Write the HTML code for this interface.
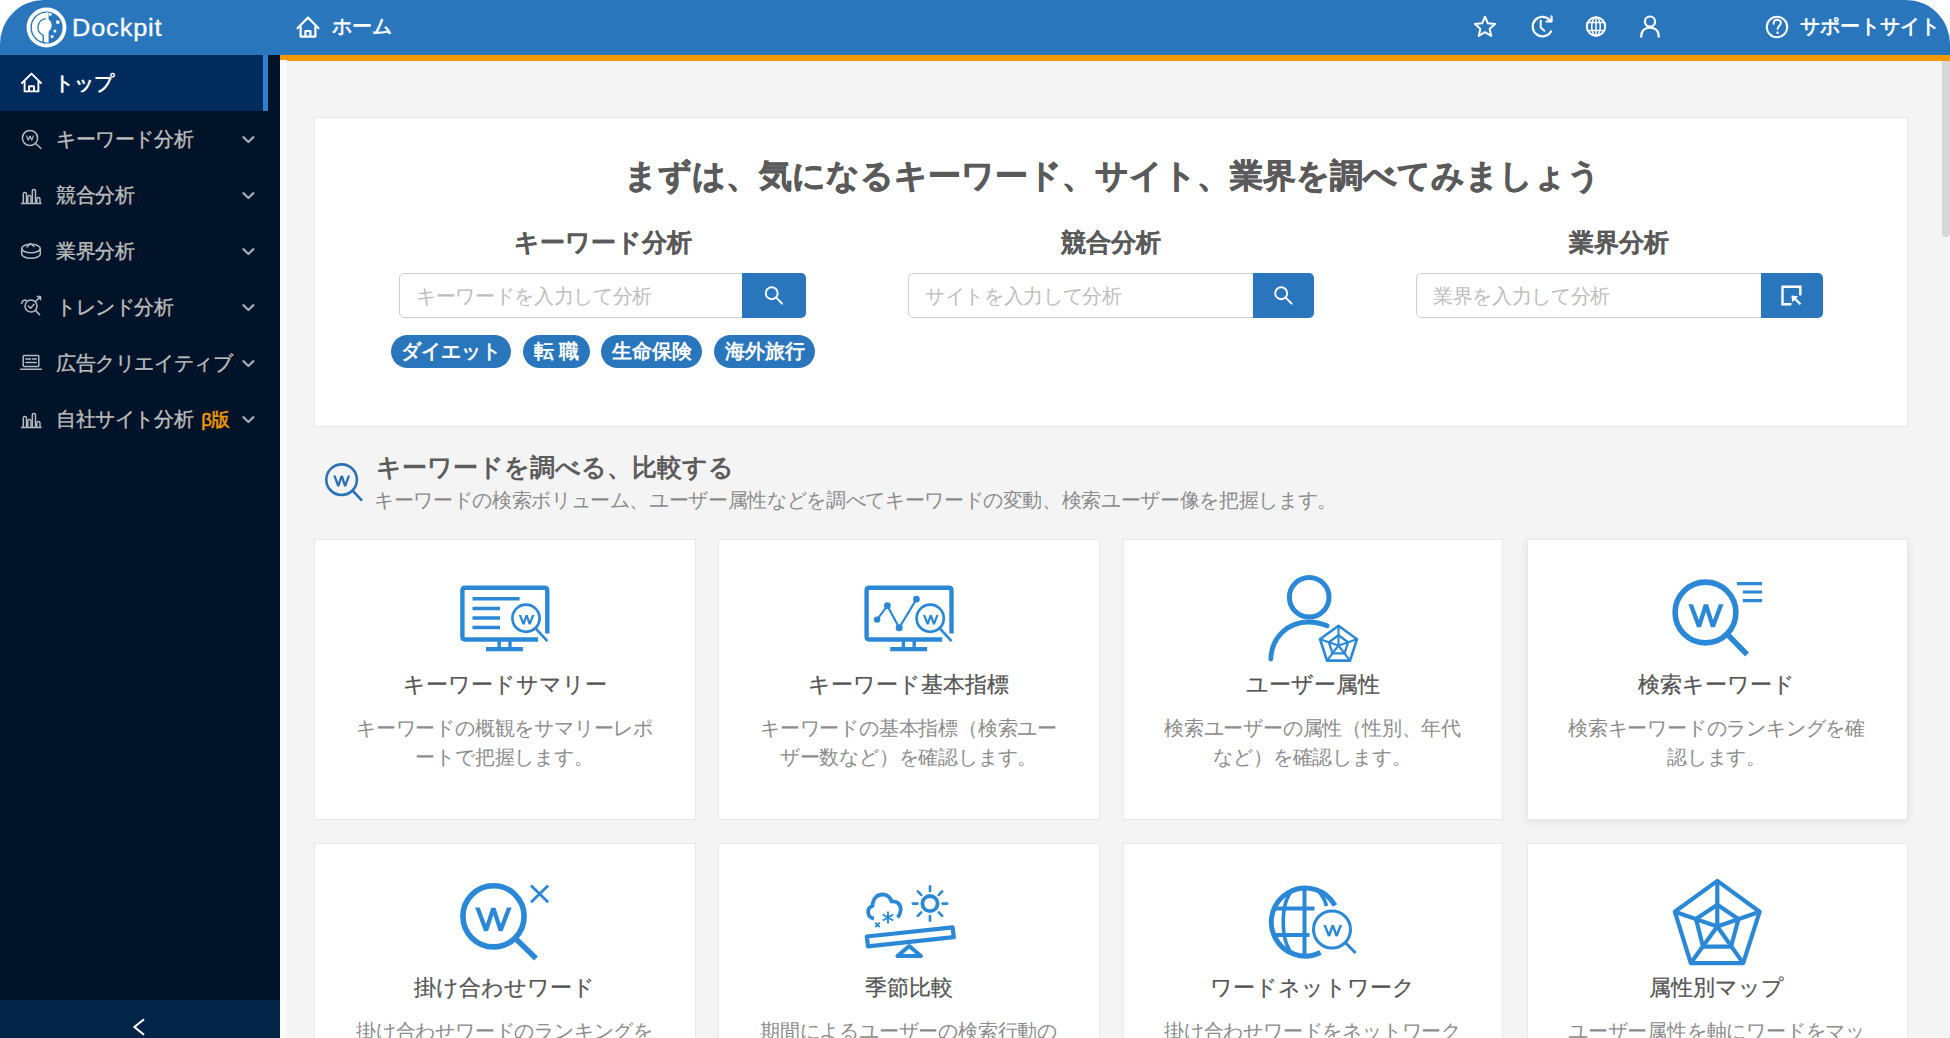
<!DOCTYPE html>
<html><head><meta charset="utf-8">
<style>
*{margin:0;padding:0;box-sizing:border-box}
html,body{width:1950px;height:1038px;overflow:hidden;background:#fff;font-family:"Liberation Sans",sans-serif}
.a{position:absolute;white-space:nowrap}
#hdr{left:0;top:0;width:1950px;height:55px;background:#2a76bd;border-radius:44px 44px 0 0}
#side{left:0;top:55px;width:280px;height:983px;background:#001329}
#act{left:0;top:55px;width:263px;height:56px;background:#002b5c}
#actbar{left:263px;top:55px;width:5px;height:56px;background:#2e80cf}
#coll{left:0;top:1000px;width:280px;height:38px;background:#012447}
#main{left:280px;top:55px;width:1670px;height:983px;background:#f4f4f4}
#orange{left:280px;top:55px;width:1670px;height:5.6px;background:#f39800}
#thumb{left:1942px;top:61px;width:8px;height:176px;background:#d6d6d6;border-radius:0 0 4px 4px}
.card{position:absolute;background:#fff;border:1px solid #e8e8e8}
.sb{font-size:19.5px;line-height:19.5px;letter-spacing:-0.4px;color:#bcbcbc;-webkit-text-stroke:0.35px #bcbcbc}
.ht{font-size:19.5px;line-height:19.5px;color:#fff;font-weight:bold}
.h1{font-size:32.85px;line-height:34px;color:#5a5a5a;font-weight:bold;-webkit-text-stroke:0.7px #5a5a5a}
.h2{font-size:25px;line-height:25px;color:#5a5a5a;font-weight:bold;-webkit-text-stroke:0.15px #5a5a5a;text-align:center;width:400px}
.inp{position:absolute;height:45px;border:1px solid #cfcfcf;border-radius:5px;background:#fff}
.ph{font-size:19.5px;line-height:19.5px;color:#bdbdbd;letter-spacing:-0.35px}
.btn{position:absolute;height:45px;width:64px;background:#2a76bd;border-radius:0 5px 5px 0}
.tag{position:absolute;top:335px;height:33px;border-radius:17px;background:#2a76bd;color:#fff;font-weight:bold;font-size:19.5px;line-height:33px;text-align:center}
.ct{font-size:21.5px;line-height:23px;color:#555;-webkit-text-stroke:0.25px #555;text-align:center;width:381px}
.cd{font-size:19.5px;line-height:29px;letter-spacing:-0.2px;text-indent:0;color:#8c8c8c;text-align:center;width:381px}
</style></head><body>
<div class="a" id="main"></div>
<div class="a" id="hdr"></div>
<div class="a" id="side"></div>
<div class="a" id="act"></div>
<div class="a" id="actbar"></div>
<div class="a" id="coll"></div>
<div class="a" id="orange"></div>
<div class="a" id="thumb"></div>
<div class="a" style="left:280px;top:60px;width:7px;height:978px;background:#fafafa"></div>

<!-- header text -->
<div class="a" style="left:72px;top:13.5px;font-size:23px;line-height:28px;color:#fff;letter-spacing:0.8px;-webkit-text-stroke:0.3px #fff;transform:scaleX(1.1);transform-origin:0 0">Dockpit</div>
<div class="a ht" style="left:332px;top:17px">ホーム</div>
<div class="a ht" style="left:1800px;top:17px">サポートサイト</div>

<!-- sidebar text -->
<div class="a ht" style="left:54px;top:74px">トップ</div>
<div class="a sb" style="left:56px;top:130px">キーワード分析</div>
<div class="a sb" style="left:56px;top:186px">競合分析</div>
<div class="a sb" style="left:56px;top:242px">業界分析</div>
<div class="a sb" style="left:56px;top:298px">トレンド分析</div>
<div class="a sb" style="left:56px;top:354px">広告クリエイティブ</div>
<div class="a sb" style="left:56px;top:410px">自社サイト分析 <span style="color:#f39800;-webkit-text-stroke:0.5px #f39800;font-size:18.5px;margin-left:3px;letter-spacing:-0.5px">β版</span></div>

<!-- top card -->
<div class="card" style="left:314px;top:117px;width:1594px;height:310px"></div>
<div class="a h1" style="left:624px;top:159px">まずは、気になるキーワード、サイト、業界を調べてみましょう</div>
<div class="a h2" style="left:403px;top:230px">キーワード分析</div>
<div class="a h2" style="left:911px;top:230px">競合分析</div>
<div class="a h2" style="left:1419px;top:230px">業界分析</div>

<div class="inp" style="left:399px;top:273px;width:350px"></div>
<div class="btn" style="left:742px;top:273px"></div>
<div class="a ph" style="left:416px;top:287px">キーワードを入力して分析</div>
<div class="inp" style="left:908px;top:273px;width:350px"></div>
<div class="btn" style="left:1253px;top:273px;width:61px"></div>
<div class="a ph" style="left:925px;top:287px">サイトを入力して分析</div>
<div class="inp" style="left:1416px;top:273px;width:350px"></div>
<div class="btn" style="left:1761px;top:273px;width:62px"></div>
<div class="a ph" style="left:1433px;top:287px">業界を入力して分析</div>

<div class="tag" style="left:391px;width:120px">ダイエット</div>
<div class="tag" style="left:523px;width:67px">転 職</div>
<div class="tag" style="left:601px;width:101px">生命保険</div>
<div class="tag" style="left:714px;width:101px">海外旅行</div>

<!-- section header -->
<div class="a" style="left:376px;top:455px;font-size:25px;line-height:25px;color:#5c5c5c;font-weight:bold">キーワードを調べる、比較する</div>
<div class="a" style="left:374px;top:491px;font-size:19.5px;letter-spacing:-0.35px;line-height:19.5px;color:#8c8c8c">キーワードの検索ボリューム、ユーザー属性などを調べてキーワードの変動、検索ユーザー像を把握します。</div>

<!-- cards row 1 -->
<div class="card" style="left:314px;top:539px;width:382px;height:281px"></div>
<div class="card" style="left:718px;top:539px;width:382px;height:281px"></div>
<div class="card" style="left:1123px;top:539px;width:380px;height:281px"></div>
<div class="card" style="left:1527px;top:539px;width:381px;height:281px;box-shadow:0 2px 8px rgba(0,0,0,0.08)"></div>
<!-- cards row 2 -->
<div class="card" style="left:314px;top:843px;width:382px;height:220px"></div>
<div class="card" style="left:718px;top:843px;width:382px;height:220px"></div>
<div class="card" style="left:1123px;top:843px;width:380px;height:220px"></div>
<div class="card" style="left:1527px;top:843px;width:381px;height:220px"></div>

<div class="a ct" style="left:314px;top:674px">キーワードサマリー</div>
<div class="a cd" style="left:314px;top:714px;">キーワードの概観をサマリーレポ<br>ートで把握します。</div>
<div class="a ct" style="left:718px;top:674px">キーワード基本指標</div>
<div class="a cd" style="left:718px;top:714px;">キーワードの基本指標（検索ユー<br>ザー数など）を確認します。</div>
<div class="a ct" style="left:1122px;top:674px">ユーザー属性</div>
<div class="a cd" style="left:1122px;top:714px;">検索ユーザーの属性（性別、年代<br>など）を確認します。</div>
<div class="a ct" style="left:1526px;top:674px">検索キーワード</div>
<div class="a cd" style="left:1526px;top:714px;">検索キーワードのランキングを確<br>認します。</div>

<div class="a ct" style="left:314px;top:977px">掛け合わせワード</div>
<div class="a cd" style="left:314px;top:1017px;">掛け合わせワードのランキングを</div>
<div class="a ct" style="left:718px;top:977px">季節比較</div>
<div class="a cd" style="left:718px;top:1017px;">期間によるユーザーの検索行動の</div>
<div class="a ct" style="left:1122px;top:977px">ワードネットワーク</div>
<div class="a cd" style="left:1122px;top:1017px;">掛け合わせワードをネットワーク</div>
<div class="a ct" style="left:1526px;top:977px">属性別マップ</div>
<div class="a cd" style="left:1526px;top:1017px;">ユーザー属性を軸にワードをマッ</div>

<svg class="a" style="left:0;top:0" width="1950" height="1038" viewBox="0 0 1950 1038" fill="none">
<defs><clipPath id="wc1"><rect x="21.8" y="135.6" width="16.400000000000002" height="9.0"/></clipPath><clipPath id="wc2"><rect x="329.2" y="475.4" width="25.0" height="15.200000000000045"/></clipPath><clipPath id="wc3"><rect x="514.8" y="615" width="23.600000000000023" height="13.5"/></clipPath><clipPath id="wc4"><rect x="919.0" y="615" width="23.600000000000023" height="13.5"/></clipPath><clipPath id="wc5"><rect x="1684.5" y="604.3" width="42.90000000000009" height="27.200000000000045"/></clipPath><clipPath id="wc6"><rect x="471.2" y="907.6" width="44.30000000000001" height="27.799999999999955"/></clipPath><clipPath id="wc7"><rect x="1319.4" y="924.9" width="26.799999999999955" height="15.600000000000023"/></clipPath></defs>
<circle cx="46.5" cy="27.5" r="18" stroke="#fff" stroke-width="3.8"/>
<path d="M46.5 12.8 A14.7 14.7 0 0 0 46.5 42.2 Z" fill="#fff"/>
<path d="M45.8 18.6 A8.8 8.8 0 0 0 43.2 35.4 V43" stroke="#2a76bd" stroke-width="1.4"/>
<rect x="45.8" y="12.5" width="2.8" height="30" fill="#fff"/>
<path d="M46 19.2 C52.5 19.2 53.5 27.5 48.6 31.5 L46 31.5 Z" fill="#fff"/>
<rect x="49" y="13" width="2.6" height="2.6" fill="#fff"/>
<rect x="56.2" y="20.5" width="3.2" height="3.2" fill="#fff"/>
<rect x="53.6" y="29.8" width="2.6" height="2.6" fill="#fff"/>
<rect x="50.8" y="35.3" width="2.6" height="2.6" fill="#fff"/>
<g stroke="#fff" stroke-width="2.2" stroke-linejoin="round" stroke-linecap="round">
<path d="M297.5 28.2 L308 17.6 L318.5 28.2 M300.6 25.4 V36.6 H315.4 V25.4 M305.4 36.6 V31 H310.4 V36.6"/>
<polygon points="1485.00,16.70 1487.88,23.34 1495.08,24.02 1489.66,28.81 1491.23,35.88 1485.00,32.20 1478.77,35.88 1480.34,28.81 1474.92,24.02 1482.12,23.34" stroke-width="2"/>
<path d="M1550.3 20.6 A9.8 9.8 0 1 0 1551 31.5" stroke-width="2.2"/>
<path d="M1551.6 16.3 V21.6 H1546.5" stroke-width="2"/>
<path d="M1540.7 20.8 V27.6 L1544.3 30.8" stroke-width="2"/>
<circle cx="1596" cy="26.5" r="9.2" stroke-width="2"/>
<ellipse cx="1596" cy="26.5" rx="4.3" ry="9.2" stroke-width="1.5"/>
<path d="M1596 17.3 V35.7 M1587.3 22.6 H1604.7 M1587.3 30.4 H1604.7" stroke-width="1.5"/>
<circle cx="1650" cy="21.6" r="5.1" stroke-width="2.2"/>
<path d="M1641.2 36.8 C1641.2 30.5 1645 27.6 1650 27.6 C1655 27.6 1658.8 30.5 1658.8 36.8" stroke-width="2.2"/>
<circle cx="1777" cy="27" r="10.2" stroke-width="2"/>
<path d="M1773.6 23.8 C1773.6 21 1775.5 19.8 1777.3 19.8 C1779.4 19.8 1780.9 21.2 1780.9 23.1 C1780.9 25.6 1777.6 25.9 1777.6 29" stroke-width="1.9"/>
</g>
<circle cx="1777.6" cy="32.8" r="1.3" fill="#fff"/>
<path d="M22 83 L31.5 73.6 L41 83 M24.6 80.6 V91.4 H38.4 V80.6 M29 91.4 V86.2 H34 V91.4" stroke="#fff" stroke-width="1.9" stroke-linejoin="round" stroke-linecap="round"/>
<g stroke="#b4b8bf" stroke-width="1.5" stroke-linecap="round" stroke-linejoin="round">
<circle cx="30" cy="138" r="7.6"/><path d="M35.5 143.5 L41 148.5"/>
</g>
<path d="M25.71 133.80 L28.32 140.34 L30.00 135.70 L31.68 140.34 L34.29 133.80" stroke="#b4b8bf" stroke-width="1.2" stroke-linejoin="bevel" fill="none" clip-path="url(#wc1)"/>
<g stroke="#b4b8bf" stroke-width="1.5" stroke-linecap="round" stroke-linejoin="round">
<path d="M21.5 203.5 H41"/>
<path d="M23.3 203 V194 a1.6 1.6 0 0 1 3.2 0 V203"/>
<path d="M27.8 203 V197 a1.6 1.6 0 0 1 3.2 0 V203"/>
<path d="M32.3 203 V191 a1.6 1.6 0 0 1 3.2 0 V203"/>
<path d="M36.8 203 V199 a1.6 1.6 0 0 1 3.2 0 V203"/>
<path d="M21.5 427.5 H41"/>
<path d="M23.3 427 V418 a1.6 1.6 0 0 1 3.2 0 V427"/>
<path d="M27.8 427 V421 a1.6 1.6 0 0 1 3.2 0 V427"/>
<path d="M32.3 427 V415 a1.6 1.6 0 0 1 3.2 0 V427"/>
<path d="M36.8 427 V423 a1.6 1.6 0 0 1 3.2 0 V427"/>
<ellipse cx="31" cy="248.5" rx="9.3" ry="4.3"/><path d="M21.7 248.5 V254 A9.3 4.3 0 0 0 40.3 254 V248.5"/><path d="M27 247 L30.5 243.5 L34 246.5"/>
<circle cx="31" cy="306" r="6"/><path d="M35.4 310.4 L39.6 314.6"/><path d="M28.3 306 L30.6 308.2 L34 304.3"/><path d="M21.5 303.5 C22.5 300.5 24.5 299.5 26.5 300.5"/><path d="M35.5 301.5 L40.5 296.5 M37.3 296.5 H40.5 V299.7"/>
<rect x="23.2" y="355.6" width="15.6" height="11" rx="1"/><path d="M20.6 369.3 H41.4"/><path d="M25.8 359 H30.5 M25.8 362.6 H36.2 M32.5 359 H36.2"/>
<path d="M243.4 137.2 L248.4 142 L253.4 137.2" stroke="#9ea6b1" stroke-width="2.3"/>
<path d="M243.4 193.2 L248.4 198 L253.4 193.2" stroke="#9ea6b1" stroke-width="2.3"/>
<path d="M243.4 249.2 L248.4 254 L253.4 249.2" stroke="#9ea6b1" stroke-width="2.3"/>
<path d="M243.4 305.2 L248.4 310 L253.4 305.2" stroke="#9ea6b1" stroke-width="2.3"/>
<path d="M243.4 361.2 L248.4 366 L253.4 361.2" stroke="#9ea6b1" stroke-width="2.3"/>
<path d="M243.4 417.2 L248.4 422 L253.4 417.2" stroke="#9ea6b1" stroke-width="2.3"/>
</g>
<path d="M144 1019.2 L134.4 1027 L144 1034.8" stroke="#fff" stroke-width="2.1"/>
<g stroke="#fff" stroke-width="1.9" stroke-linecap="round">
<circle cx="771.7" cy="293.2" r="6"/><path d="M776.2 297.7 L782 303.5"/>
<circle cx="1281.2" cy="293.2" r="6"/><path d="M1285.7 297.7 L1291.5 303.5"/>
</g>
<path d="M1800.3 295.6 V286.7 H1782.5 V304.3 H1791.4" stroke="#fff" stroke-width="2.4"/>
<path d="M1800.5 304.3 L1794.3 298.1" stroke="#fff" stroke-width="2.2"/>
<path d="M1791.4 295.4 L1798.2 296.2 L1792.2 302.2 Z" fill="#fff"/>
<g stroke="#2c70b6" stroke-width="2.6">
<circle cx="341.6" cy="479.7" r="15.3"/><path d="M352.6 490.6 L362 500.6"/>
</g>
<path d="M333.13 471.95 L338.30 486.09 L341.70 475.62 L345.10 486.09 L350.27 471.95" stroke="#2c70b6" stroke-width="2.3" stroke-linejoin="bevel" fill="none" clip-path="url(#wc2)"/>
<g transform="translate(450,575)" stroke="#2b88d6">
<path d="M97.3 58.5 V15.5 Q97.3 12.8 94.6 12.8 H15.1 Q12.4 12.8 12.4 15.5 V61.8 Q12.4 64.5 15.1 64.5 H88" stroke-width="4.4"/>
<path d="M49.2 66 V73 M60 66 V73" stroke-width="3.4"/>
<path d="M36 74.1 H72.9" stroke-width="4.2"/>
<circle cx="76" cy="43.2" r="13.6" stroke-width="2.7"/>
<path d="M85.4 53.2 L97.3 66.1" stroke-width="2.7"/>
</g>
<path d="M518.66 611.70 L523.48 624.02 L526.60 615.19 L529.72 624.02 L534.54 611.70" stroke="#2b88d6" stroke-width="2.2" stroke-linejoin="bevel" fill="none" clip-path="url(#wc3)"/>
<path d="M472.5 598.8 H519.6 M472.5 608.6 H500 M472.5 618 H500 M472.5 627.4 H500" stroke="#2b88d6" stroke-width="3.5"/>
<g transform="translate(854.2,575)" stroke="#2b88d6">
<path d="M97.3 58.5 V15.5 Q97.3 12.8 94.6 12.8 H15.1 Q12.4 12.8 12.4 15.5 V61.8 Q12.4 64.5 15.1 64.5 H88" stroke-width="4.4"/>
<path d="M49.2 66 V73 M60 66 V73" stroke-width="3.4"/>
<path d="M36 74.1 H72.9" stroke-width="4.2"/>
<circle cx="76" cy="43.2" r="13.6" stroke-width="2.7"/>
<path d="M85.4 53.2 L97.3 66.1" stroke-width="2.7"/>
</g>
<path d="M922.86 611.70 L927.68 624.02 L930.80 615.19 L933.92 624.02 L938.74 611.70" stroke="#2b88d6" stroke-width="2.2" stroke-linejoin="bevel" fill="none" clip-path="url(#wc4)"/>
<polyline points="877.1,619.6 887.4,605.7 899.2,627.8 916.4,599.2" stroke="#2b88d6" stroke-width="2.2"/>
<g fill="#2b88d6">
<circle cx="877.1" cy="619.6" r="3.2"/>
<circle cx="887.4" cy="605.7" r="3.4"/>
<circle cx="899.2" cy="627.8" r="3.5"/>
<circle cx="916.4" cy="599.2" r="3.4"/>
</g>
<g stroke="#2b88d6" stroke-linecap="round" stroke-linejoin="round">
<circle cx="1309.2" cy="597.2" r="19.8" stroke-width="5"/>
<path d="M1270.8 659 C1271.5 637 1288 622 1308.5 622 C1315 622 1321.5 623.5 1327 625.8" stroke-width="4.8"/>
<polygon points="1338.50,625.80 1357.00,639.20 1350.00,660.60 1327.00,660.60 1320.00,639.20" stroke-width="2.6"/>
<polygon points="1338.50,635.26 1348.12,642.22 1344.48,653.35 1332.52,653.35 1328.88,642.22" stroke-width="2.3"/>
<path d="M1338.5 645.5 L1338.5 625.8 M1338.5 645.5 L1357.0 639.2 M1338.5 645.5 L1350.0 660.6 M1338.5 645.5 L1327.0 660.6 M1338.5 645.5 L1320.0 639.2" stroke-width="2.1"/>
</g>
<g stroke="#2b88d6">
<circle cx="1705.5" cy="612.5" r="30.4" stroke-width="5.6"/>
<path d="M1727 634 L1747 654.5" stroke-width="5.4"/>
<path d="M1736.9 583.7 H1762 M1742.8 592 H1762 M1742.8 600.6 H1762" stroke-width="3.2"/>
</g>
<path d="M1688.34 597.85 L1698.97 626.55 L1705.95 604.76 L1712.93 626.55 L1723.56 597.85" stroke="#2b88d6" stroke-width="4.3" stroke-linejoin="bevel" fill="none" clip-path="url(#wc5)"/>
<g stroke="#2b88d6">
<circle cx="493.5" cy="916.3" r="30.6" stroke-width="5.6"/>
<path d="M515.5 938.5 L536 958.5" stroke-width="5.4"/>
<path d="M531 885.5 L548.2 902.2 M548.2 885.5 L531 902.2" stroke-width="2.8"/>
</g>
<path d="M474.98 901.15 L486.09 930.45 L493.35 908.08 L500.61 930.45 L511.72 901.15" stroke="#2b88d6" stroke-width="4.3" stroke-linejoin="bevel" fill="none" clip-path="url(#wc6)"/>
<g stroke="#2b88d6" stroke-width="4" stroke-linejoin="round">
<polygon points="866.8,936.5 952.6,927.4 953.8,937.2 868,946.3" stroke-width="4.2"/>
<polygon points="909.3,946 897.5,956 921,956" stroke-width="4"/>
<circle cx="930" cy="903.6" r="7.6" stroke-width="3.8"/>
<path d="M930.0 891.1 L930.0 886.4 M938.8 894.8 L942.2 891.4 M942.5 903.6 L947.2 903.6 M938.8 912.4 L942.2 915.8 M930.0 916.1 L930.0 920.8 M921.2 912.4 L917.8 915.8 M917.5 903.6 L912.8 903.6 M921.2 894.8 L917.8 891.4" stroke-width="2.6" stroke-linecap="round"/>
<path d="M874 918.5 C867 917.5 866 908 872.5 906 C872.5 898 878 894.5 882.5 894.5 C887 894.5 890.5 897.5 891.5 901.5 C897.5 900.5 901.5 905 900.5 911 C900 914 899 916 897.5 917.5" stroke-width="3.8" stroke-linecap="butt"/>
<path d="M888 911.5 V923.5 M882.8 914.5 L893.2 920.5 M882.8 920.5 L893.2 914.5" stroke-width="1.9"/>
<path d="M875.3 922.6 L879.7 927 M879.7 922.6 L875.3 927" stroke-width="1.9"/>
</g>
<g stroke="#2b88d6">
<path d="M1335 905.5 A34 34 0 1 0 1320.5 952.5" stroke-width="5"/>
<path d="M1304.5 888.5 V956" stroke-width="4"/>
<path d="M1293 889.5 C1280 903 1280 941 1293 954.5 M1317 889.5 C1322.5 895 1325 900 1326.5 906" stroke-width="3.6"/>
<path d="M1274.5 908.5 H1314.5 M1274.5 935 H1309.5" stroke-width="4"/>
<circle cx="1332" cy="929.5" r="18.5" stroke-width="3"/>
<path d="M1345.2 942.5 L1355.6 953" stroke-width="3"/>
</g>
<path d="M1323.22 921.30 L1329.04 935.97 L1332.80 925.13 L1336.56 935.97 L1342.38 921.30" stroke="#2b88d6" stroke-width="2.4" stroke-linejoin="bevel" fill="none" clip-path="url(#wc7)"/>
<g stroke="#2b88d6" stroke-width="4.2" stroke-linejoin="round">
<polygon points="1717.30,880.90 1759.70,911.70 1743.20,963.10 1690.80,963.10 1674.80,911.70"/>
<polygon points="1717.30,904.80 1738.50,919.00 1731.00,946.70 1703.00,946.70 1696.00,919.00"/>
<path d="M1717.3 926.5 L1717.3 880.9 M1717.3 926.5 L1759.7 911.7 M1717.3 926.5 L1743.2 963.1 M1717.3 926.5 L1690.8 963.1 M1717.3 926.5 L1674.8 911.7"/>
</g>
</svg>
</body></html>
